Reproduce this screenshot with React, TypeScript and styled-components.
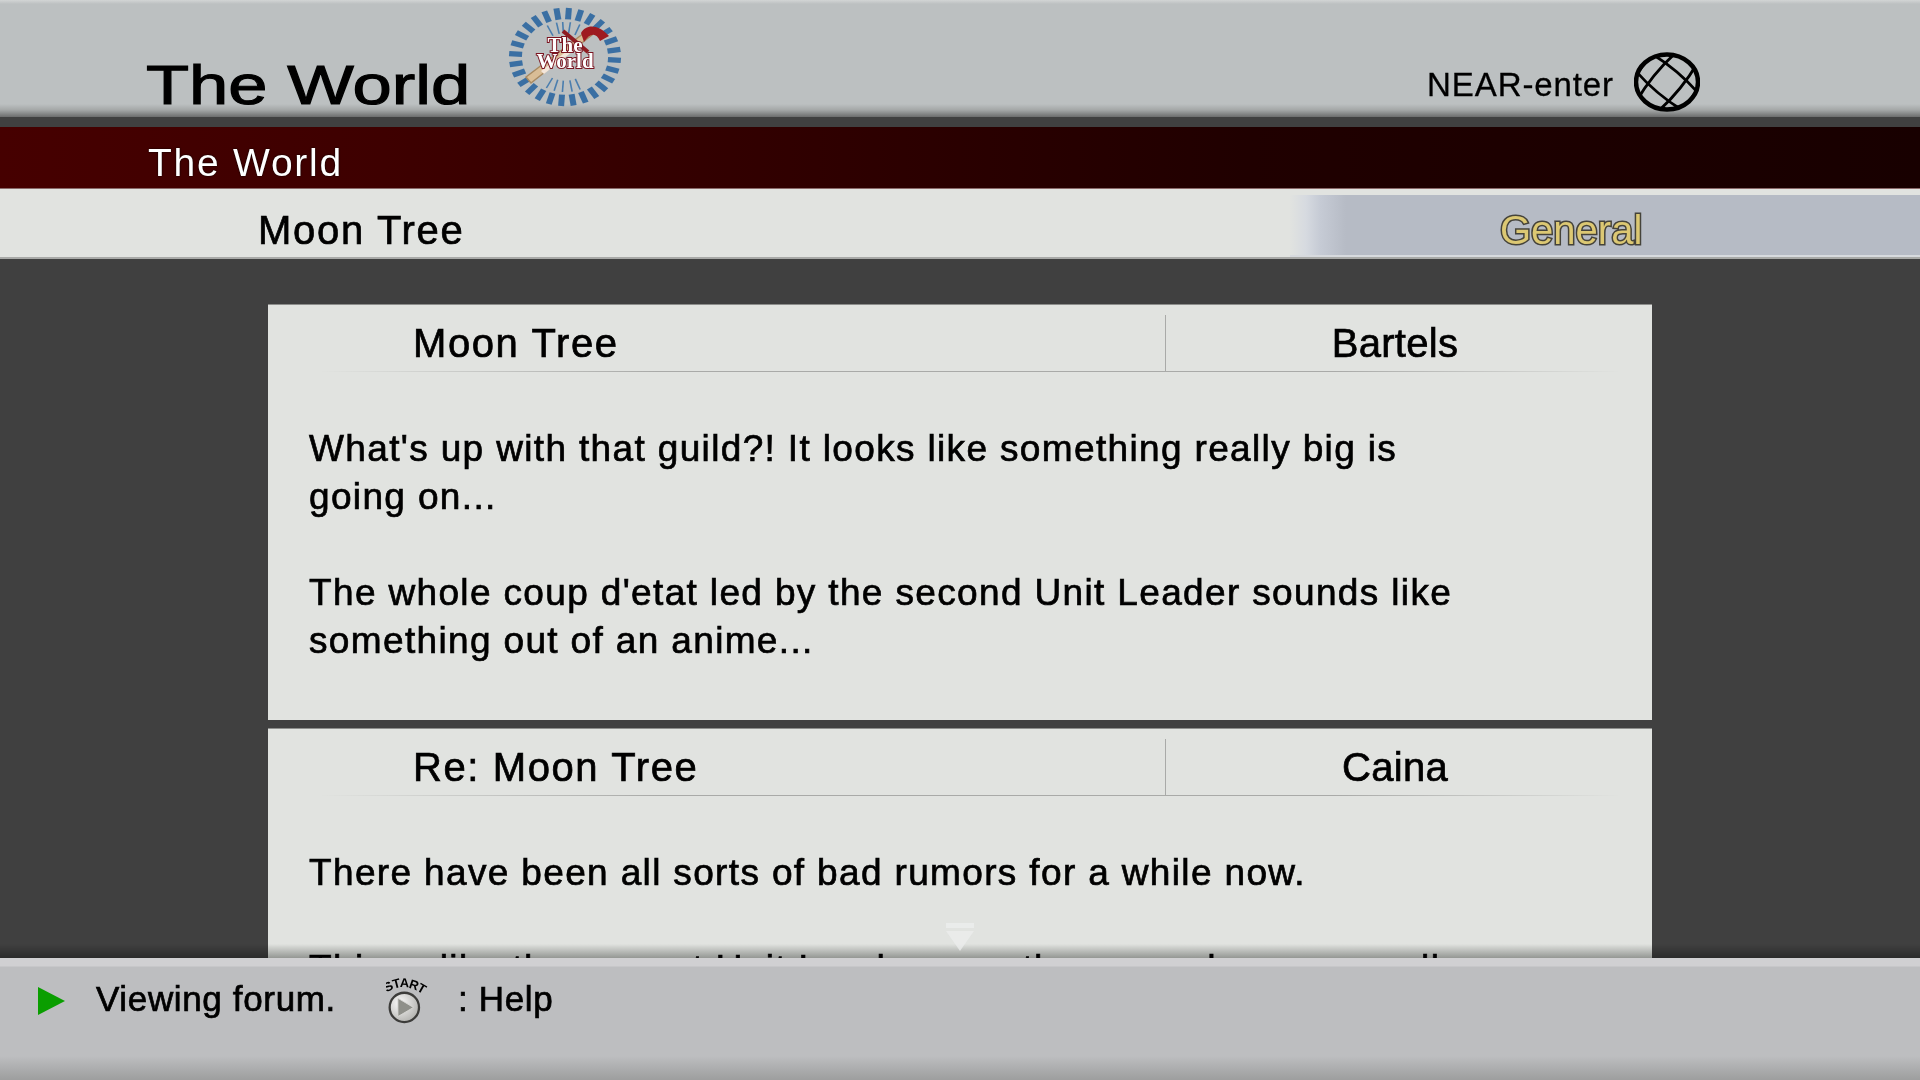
import styled, { createGlobalStyle } from 'styled-components';

const GlobalStyle = createGlobalStyle`
  html, body {
    margin: 0;
    padding: 0;
    background: #404040;
  }
  * {
    box-sizing: border-box;
  }
`;

const Page = styled.div`
  width: 1920px;
  height: 1080px;
  display: flex;
  flex-direction: column;
  overflow: hidden;
  background: #404040;
  font-family: 'Liberation Sans', Arial, sans-serif;
  color: #000;
`;

const TopBar = styled.header`
  height: 117px;
  flex: none;
  display: flex;
  align-items: flex-start;
  padding: 0 220px 0 146px;
  background: linear-gradient(
    180deg,
    #d2d5d5 0,
    #bcc0c1 4px,
    #bcc0c1 104px,
    #a4a7a7 110px,
    #6c6d6d 117px
  );
`;

const Title = styled.h1`
  width: 322px;
  margin: 52px 0 0;
  font-size: 56px;
  line-height: 66px;
  font-weight: 400;
  white-space: nowrap;
  transform: scaleX(1.26);
  transform-origin: left center;
  -webkit-text-stroke: 1.1px #000;
`;

const Logo = styled.svg`
  margin-left: 40px;
  flex: none;
`;

const Near = styled.div`
  margin: 67px 20px 0 auto;
  font-size: 33px;
  line-height: 36px;
  letter-spacing: 0.9px;
  -webkit-text-stroke: 0.3px #000;
`;

const Globe = styled.svg`
  margin-top: 52px;
  flex: none;
`;

const ForumBar = styled.div`
  height: 62px;
  flex: none;
  margin-top: 10px;
  padding: 10px 0 0 148px;
  display: flex;
  align-items: center;
  background: linear-gradient(90deg, #460000 0, #3e0000 20%, #200000 65%, #180000 100%);
  border-bottom: 1px solid #8a6a6a;
  color: #fff;
  font-size: 39px;
  letter-spacing: 1.75px;
  text-shadow: 0 0 2px #000;
`;

const ThreadBar = styled.div`
  height: 70px;
  flex: none;
  display: flex;
  justify-content: space-between;
  background: #e1e3e0;
  border-bottom: 2px solid #a8a9a7;
`;

const ThreadName = styled.div`
  padding: 8px 0 0 258px;
  font-size: 40px;
  line-height: 66px;
  letter-spacing: 1.7px;
  -webkit-text-stroke: 0.7px #000;
`;

const CategoryTab = styled.div`
  width: 630px;
  height: 62px;
  margin-top: 6px;
  padding: 5px 0 0 210px;
  background: linear-gradient(
    90deg,
    #e1e3e0 0,
    #d6dae0 16px,
    #c6cbd5 30px,
    #b6bbc5 56px
  );
  border-bottom: 2px solid #d7dade;
  font-size: 40px;
  line-height: 60px;
  color: #dcc873;
  -webkit-text-stroke: 3px #45433a;
  paint-order: stroke fill;
`;

const Main = styled.main`
  position: relative;
  flex: 1;
  min-height: 0;
  overflow: hidden;
  padding: 45px 268px 0;
`;

const Post = styled.article`
  background: #e1e3e0;
  border-top: 1px solid #8d8e8c;
  padding: 10px 40px 55px 52px;

  & + & {
    margin-top: 8px;
  }
`;

const PostHeader = styled.div`
  display: flex;
  height: 57px;
  margin-right: -8px;
  border-bottom: 1px solid;
  border-image: linear-gradient(90deg, transparent 0, #a9aaa8 26%, #a9aaa8 78%, transparent 100%) 1;
`;

const PostTitle = styled.div`
  width: 845px;
  padding-left: 93px;
  font-size: 40px;
  line-height: 56px;
  letter-spacing: 1.6px;
  -webkit-text-stroke: 0.7px #000;
`;

const PostAuthor = styled.div`
  flex: 1;
  padding-left: 4px;
  border-left: 1px solid #a9aaa8;
  text-align: center;
  font-size: 40px;
  line-height: 56px;
  letter-spacing: 0.3px;
  -webkit-text-stroke: 0.7px #000;
`;

const PostBody = styled.div`
  margin: 53px 0 0 -11px;
  width: 1170px;
`;

const Paragraph = styled.p`
  margin: 0 0 48px;
  font-size: 37px;
  line-height: 48px;
  letter-spacing: 1.35px;
  -webkit-text-stroke: 0.7px #000;

  &:last-child {
    margin-bottom: 0;
  }
`;

const BottomFade = styled.div`
  position: absolute;
  left: 0;
  right: 0;
  bottom: 0;
  height: 14px;
  background: linear-gradient(180deg, #fff, #a8aaa8);
  mix-blend-mode: multiply;
`;

const ScrollHint = styled.svg`
  position: absolute;
  left: 945px;
  bottom: 5px;
`;

const Footer = styled.footer`
  height: 122px;
  flex: none;
  display: flex;
  align-items: flex-start;
  padding: 0 0 0 38px;
  background: linear-gradient(
    180deg,
    #d0d0d2 0,
    #d0d0d2 8px,
    #bdbec0 9px,
    #bdbec0 98px,
    #9d9e9e 122px
  );
`;

const Arrow = styled.svg`
  margin-top: 29px;
  flex: none;
`;

const FooterText = styled.div`
  margin: 21px 0 0 ${(p: { $gap: number }) => p.$gap}px;
  font-size: 35px;
  line-height: 40px;
  letter-spacing: 0.65px;
  white-space: nowrap;
  -webkit-text-stroke: 0.7px #000;
`;

const StartIcon = styled.svg`
  margin: 20px 0 0 50px;
  flex: none;
`;

const dashes = Array.from({ length: 28 }, (_, i) => (i * 360) / 28);
const sparks = [-26, -12, -3, 8, 22, 158, 170, 184, 196, 208];
const gridLines = ['M22 -5 Q16 30 22 65', 'M44 -5 Q50 30 44 65', 'M10 -5 Q-2 30 10 65', 'M56 -5 Q68 30 56 65'];

const App = () => {
  return (
    <Page>
      <GlobalStyle />
      <TopBar>
        <Title>The World</Title>
        <Logo width="114" height="114" viewBox="0 0 114 114">
          <g transform="translate(0 7) scale(1 0.877)">
            {dashes.map((a) => (
              <rect key={a} x="54" y="1" width="6" height="13" fill="#3a6fa3" transform={`rotate(${a + 4} 57 57)`} />
            ))}
            {sparks.map((a) => (
              <rect key={a} x="56" y="17" width="1.6" height="13" fill="#4a7dae" transform={`rotate(${a} 57 57)`} />
            ))}
          </g>
          <path d="M18 77 L80 30 L84 35 L23 83 Z" fill="#d9bd96" stroke="#a88a62" strokeWidth="1.5" />
          <path d="M33 71 L72 41 L74 44 L36 74 Z" fill="#f4e6da" />
          <path d="M55 31 L80 52" stroke="#8f1c22" strokeWidth="4" fill="none" />
          <path d="M73 33 C78 24 90 24 101 36 L92 41 C88 32 82 33 76 42 Z" fill="#9e1a20" />
          <text
            x="57"
            y="52"
            textAnchor="middle"
            fontFamily="'Liberation Serif', serif"
            fontWeight="700"
            fontSize="21"
            fill="#fff"
            stroke="#7a1420"
            strokeWidth="2"
            paintOrder="stroke"
          >
            The
          </text>
          <text
            x="57"
            y="68"
            textAnchor="middle"
            fontFamily="'Liberation Serif', serif"
            fontWeight="700"
            fontSize="21"
            fill="#fff"
            stroke="#7a1420"
            strokeWidth="2"
            paintOrder="stroke"
          >
            World
          </text>
        </Logo>
        <Near>NEAR-enter</Near>
        <Globe width="66" height="60" viewBox="0 0 66 60" fill="none" stroke="#000">
          <defs>
            <clipPath id="globeClip">
              <ellipse cx="33" cy="30" rx="31" ry="27.5" />
            </clipPath>
          </defs>
          <g clipPath="url(#globeClip)" strokeWidth="2.8">
            <g transform="rotate(40 33 30)">
              {gridLines.map((d) => (
                <path key={d} d={d} />
              ))}
            </g>
            <g transform="rotate(-50 33 30)">
              {gridLines.map((d) => (
                <path key={d} d={d} />
              ))}
            </g>
          </g>
          <ellipse cx="33" cy="30" rx="31" ry="27.5" strokeWidth="4.5" />
        </Globe>
      </TopBar>

      <ForumBar>The World</ForumBar>

      <ThreadBar>
        <ThreadName>Moon Tree</ThreadName>
        <CategoryTab>General</CategoryTab>
      </ThreadBar>

      <Main>
        <Post>
          <PostHeader>
            <PostTitle>Moon Tree</PostTitle>
            <PostAuthor>Bartels</PostAuthor>
          </PostHeader>
          <PostBody>
            <Paragraph>What's up with that guild?! It looks like something really big is going on...</Paragraph>
            <Paragraph>
              The whole coup d'etat led by the second Unit Leader sounds like something out of an anime...
            </Paragraph>
          </PostBody>
        </Post>
        <Post>
          <PostHeader>
            <PostTitle>Re: Moon Tree</PostTitle>
            <PostAuthor>Caina</PostAuthor>
          </PostHeader>
          <PostBody>
            <Paragraph>There have been all sorts of bad rumors for a while now.</Paragraph>
            <Paragraph>Things like the current Unit Leader over the second one, as well.</Paragraph>
          </PostBody>
        </Post>
        <BottomFade />
        <ScrollHint width="30" height="30" viewBox="0 0 30 30">
          <rect x="1" y="0" width="28" height="5" fill="#eceeee" fillOpacity="0.8" />
          <path d="M1 8 H29 L15 28 Z" fill="#eceeee" fillOpacity="0.75" />
        </ScrollHint>
      </Main>

      <Footer>
        <Arrow width="28" height="28" viewBox="0 0 28 28">
          <path d="M0 0 L27 14 L0 28 Z" fill="#0a9e00" />
        </Arrow>
        <FooterText $gap={30}>Viewing forum.</FooterText>
        <StartIcon width="44" height="46" viewBox="0 0 48 50">
          <defs>
            <path id="startArc" d="M1 16 Q22 1 47 23" />
            <radialGradient id="startFill" cx="0.35" cy="0.35" r="0.8">
              <stop offset="0" stopColor="#fafafa" />
              <stop offset="1" stopColor="#a8a8a4" />
            </radialGradient>
          </defs>
          <text fontFamily="'Liberation Sans', sans-serif" fontWeight="700" fontSize="14" letterSpacing="-0.8" fill="#000">
            <textPath href="#startArc">START</textPath>
          </text>
          <circle cx="20" cy="32" r="16" fill="url(#startFill)" stroke="#3c3c3a" strokeWidth="2.5" />
          <path d="M13 22 L30 32 L13 42 Z" fill="#8f908a" stroke="#d8d8d4" />
        </StartIcon>
        <FooterText $gap={28}>: Help</FooterText>
      </Footer>
    </Page>
  );
};

export default App;
